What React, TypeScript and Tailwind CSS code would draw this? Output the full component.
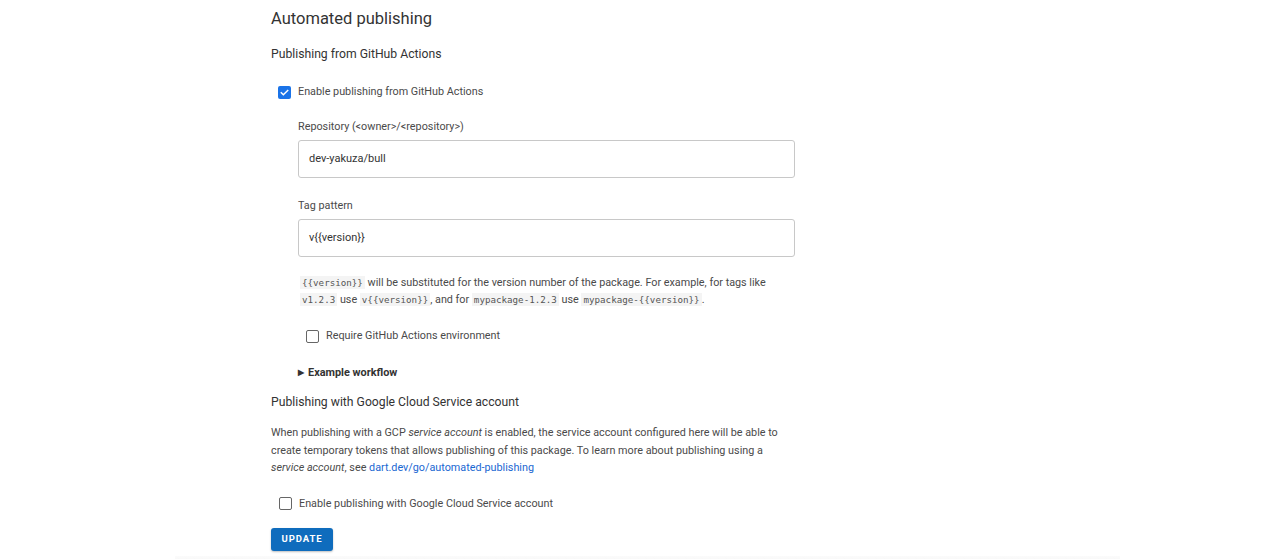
import React from "react";

const Code = ({ children }: { children: React.ReactNode }) => (
  <code className="bg-[#f4f4f4] px-[2px] py-[1px] text-[9.2px] text-[#555] font-['DejaVu_Sans_Mono',monospace]">
    {children}
  </code>
);

const Check = ({ checked }: { checked?: boolean }) =>
  checked ? (
    <span className="flex h-[13px] w-[13px] items-center justify-center rounded-[2px] bg-[#1a73e8]">
      <svg width="11" height="11" viewBox="0 0 24 24" fill="none" stroke="white" strokeWidth="3.2" strokeLinecap="square">
        <path d="M5 12.5l4.5 4.5L19 7.5" />
      </svg>
    </span>
  ) : (
    <span className="block h-[13px] w-[13px] rounded-[2px] border-[1.5px] border-[#666] bg-white" />
  );

export default function App() {
  return (
    <div className="min-h-[559px] w-full bg-white font-['Roboto',sans-serif] text-[#4a4a4a]">
      <div className="ml-[175px] w-[945px] bg-white pl-[96px] pt-[9px] pb-[5px]">
        <h2 className="text-[16.5px] leading-[20px] text-[#333]">Automated publishing</h2>
        <h3 className="mt-[16px] text-[12.2px] leading-[18px] text-[#333]">Publishing from GitHub Actions</h3>

        <label className="mt-[21px] flex items-center gap-[7px] pl-[7px]">
          <Check checked />
          <span className="text-[10.8px] leading-[16px]">Enable publishing from GitHub Actions</span>
        </label>

        <div className="pl-[27px]">
          <div className="mt-[19px] text-[10.8px] leading-[16px]">Repository (&lt;owner&gt;/&lt;repository&gt;)</div>
          <div className="mt-[5px] flex h-[38px] w-[497px] items-center rounded-[3px] border border-[#c8c8c8] px-[10px] text-[11px] text-[#333]">
            dev-yakuza/bull
          </div>

          <div className="mt-[20px] text-[10.8px] leading-[16px]">Tag pattern</div>
          <div className="mt-[5px] flex h-[38px] w-[497px] items-center rounded-[3px] border border-[#c8c8c8] px-[10px] text-[11px] text-[#333]">
            v{"{{version}}"}
          </div>

          <p className="mt-[17px] w-[500px] pl-[2px] text-[10.8px] leading-[17px]">
            <Code>{"{{version}}"}</Code> will be substituted for the version number of the package. For example, for tags like{" "}
            <Code>v1.2.3</Code> use <Code>{"v{{version}}"}</Code>, and for <Code>mypackage-1.2.3</Code> use{" "}
            <Code>{"mypackage-{{version}}"}</Code>.
          </p>

          <label className="mt-[20px] flex items-center gap-[7px] pl-[8px]">
            <Check />
            <span className="text-[10.8px] leading-[16px]">Require GitHub Actions environment</span>
          </label>

          <div className="mt-[21px] flex items-center gap-[4px] text-[10.9px] font-bold leading-[16px] text-[#333]">
            <span className="text-[8px]">▶</span>
            <span>Example workflow</span>
          </div>
        </div>

        <h3 className="mt-[12px] text-[12.2px] leading-[18px] text-[#333]">Publishing with Google Cloud Service account</h3>
        <p className="mt-[13px] w-[520px] text-[10.8px] leading-[17.5px]">
          When publishing with a GCP <i>service account</i> is enabled, the service account configured here will be able to create temporary tokens that allows publishing of this package. To learn more about publishing using a{" "}
          <i>service account</i>, see <a className="text-[#1967d2]">dart.dev/go/automated-publishing</a>
        </p>

        <label className="mt-[19px] flex items-center gap-[7px] pl-[8px]">
          <Check />
          <span className="text-[10.8px] leading-[16px]">Enable publishing with Google Cloud Service account</span>
        </label>

        <button className="mt-[16px] h-[23px] w-[62px] rounded-[3px] bg-[#0f6cbd] text-[9.5px] font-bold tracking-[0.9px] text-white shadow-[0_1px_2px_rgba(0,0,0,0.25)]">
          UPDATE
        </button>
      </div>
      <div className="ml-[175px] h-[6px] w-[945px] bg-gradient-to-b from-[#fbfbfb] to-[#f6f6f6]" />
    </div>
  );
}
